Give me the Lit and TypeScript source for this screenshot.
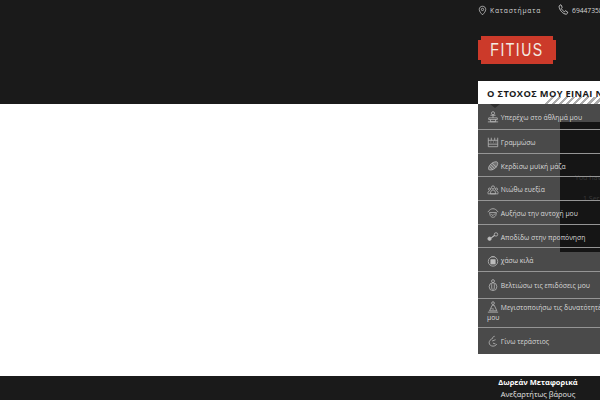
import { LitElement, html, css, svg } from "lit";
import { customElement } from "lit/decorators.js";

const ic = (body: unknown) => html`<svg class="icon" viewBox="0 0 14 14" fill="none" stroke="currentColor" stroke-width="0.9">${body}</svg>`;

const rows: { label: string; icon: unknown; kind?: string }[] = [
  { kind: "first", label: "Υπερέχω στο άθλημά μου", icon: svg`<circle cx="7" cy="2.600" r="1.800"/><path d="M4 5h6M7 5v3M2 8h10v2H2zM4 10v2.500h6V10M1 12.700h12"/>` },
  { label: "Γραμμώσω", icon: svg`<path d="M1.500 2v10.500h11V2M1.500 5h11M1.500 9.500h11M5 2v3M9 2v3M4 7h1M7 7h1M10 7h1"/>` },
  { label: "Κερδίσω μυϊκή μάζα", icon: svg`<path d="M2 11C.8 8 5 2 11 2c2 .3 1.800 3 .6 5C10 10 5 13 2 11z" fill="currentColor" fill-opacity=".35"/><path d="M4 5l5 5M6 3.500l5 5M3 7.500l4 4"/>` },
  { label: "Νιώθω ευεξία", icon: svg`<circle cx="7" cy="4" r="1.800"/><circle cx="3" cy="6" r="1.300"/><circle cx="11" cy="6" r="1.300"/><path d="M1 11c0-2 1-3 2-3M13 11c0-2-1-3-2-3M4 11.500c0-3 1.200-4.500 3-4.500s3 1.500 3 4.500zM1 11.500h12"/>` },
  { label: "Αυξήσω την αντοχή μου", icon: svg`<path d="M1 6c2-3 4-4 6-4s4 1 6 4"/><path d="M3 6.500h8l-.8 3.500c-1 1.500-2 2-3.200 2s-2.200-.5-3.200-2z"/><path d="M5 8.500l2 1.500 2.500-2.500"/>` },
  { label: "Αποδίδω στην προπόνηση", icon: svg`<circle cx="3" cy="9" r="2" fill="currentColor"/><path d="M5 8l4-3" stroke-width="1.400"/><circle cx="10.500" cy="4" r="2"/>` },
  { label: "χάσω κιλά", icon: svg`<circle cx="7" cy="7.500" r="5.500"/><rect x="4.500" y="5.500" width="5" height="5" fill="currentColor"/><path d="M5 2h4"/>` },
  { kind: "tall", label: "Βελτιώσω τις επιδόσεις μου", icon: svg`<circle cx="7" cy="2.500" r="1.700"/><circle cx="7" cy="9" r="4.500"/><path d="M5.500 6v5c1 1.500 2 1.500 3 0V6"/>` },
  { kind: "wrap", label: "Μεγιστοποιήσω τις δυνατότητές μου", icon: svg`<circle cx="7" cy="2.500" r="1.600"/><path d="M6 5l-3 6.500h8.500L8.500 5zM1 13h12M5 9l3 .5"/>` },
  { kind: "last", label: "Γίνω τεράστιος", icon: svg`<path d="M9 1.500c-1.500 0-2.500 1-2.500 2.500M6.500 4C4 5 2.500 7 2.500 9c0 2.500 2.200 4 4.500 4 2 0 3.500-1 4.500-2.500M6 7l4-1.500M7 9.500l3 1"/>` },
];

@customElement("app-root")
export class AppRoot extends LitElement {
  static styles = css`
    :host {
      display: grid;
      grid-template-rows: 104px 272px 24px;
      position: relative;
      width: 600px;
      height: 400px;
      overflow: hidden;
      background: #fff;
      font-family: "Open Sans", "Noto Sans", sans-serif;
      color: #e6e6e6;
    }
    .header {
      background: #1a1a1a;
      padding: 4px 0 0 478px;
      display: flex;
      flex-direction: column;
      overflow: hidden;
    }
    .top {
      display: flex;
      align-items: center;
      gap: 17px;
      height: 12px;
      font-size: 6.700px;
      white-space: nowrap;
      color: #d4d4d4;
    }
    .top span { display: flex; align-items: center; gap: 3px; }
    .stores { letter-spacing: 0.800px; }
    .stores svg { width: 9px; height: 11px; flex: none; }
    .phone svg { width: 11px; height: 12px; flex: none; }
    .logo { margin-top: 20px; width: 78px; height: 28px; }
    .logo-shape {
      width: 78px;
      height: 28px;
      background: #cc3a2a;
      clip-path: polygon(3px 0, 75px 0, 75px 4px, 78px 4px, 78px 24px, 75px 24px, 75px 28px, 3px 28px, 3px 24px, 0 24px, 0 4px, 3px 4px);
      display: flex;
      align-items: center;
      justify-content: center;
      color: #f3ece4;
      font-family: "Liberation Sans", sans-serif;
      font-size: 14px;
      letter-spacing: 1.500px;
    }
    .logo-shape span { display: inline-block; transform: scaleY(1.300); margin-top: -1px; }
    .main { background: #fff; }
    .footer {
      background: #1a1a1a;
      padding-left: 478px;
      display: flex;
      flex-direction: column;
      align-items: center;
      font-size: 7.500px;
      line-height: 11.500px;
      white-space: nowrap;
    }
    .footer span { width: 120px; margin-right: 2px; text-align: center; display: block; }
    .footer .free { font-weight: 700; color: #fff; margin-top: 1px; }
    .card {
      position: absolute;
      left: 478px;
      top: 81px;
      width: 300px;
      height: 273px;
      display: flex;
      flex-direction: column;
      background: #4a4a4a;
    }
    .title {
      height: 23px;
      flex: none;
      background: #fff;
      color: #1a1a1a;
      font-weight: 700;
      font-size: 9.300px;
      letter-spacing: 0.350px;
      line-height: 25px;
      padding-left: 9px;
      white-space: nowrap;
      position: relative;
      overflow: hidden;
    }
    .stripes {
      position: absolute;
      left: 66px;
      right: 0;
      bottom: 0;
      height: 7px;
      background: repeating-linear-gradient(135deg, #adadad 0 2.500px, #fff 2.500px 5px);
      clip-path: polygon(7px 0, 100% 0, 100% 100%, 0 100%);
    }
    .title b { position: relative; font-weight: 700; }
    .list { flex: 1; position: relative; display: flex; flex-direction: column; }
    .chev { position: absolute; left: 12px; top: 0; width: 10px; height: 4px; }
    .shade {
      position: absolute;
      left: 82px;
      top: 18px;
      width: 218px;
      height: 130px;
      background: #151515;
      color: #3a3a3a;
      font-size: 7px;
      display: flex;
      flex-direction: column;
      padding: 51px 0 0 15px;
      gap: 12px;
      box-sizing: border-box;
      white-space: nowrap;
    }
    .shade span + span { margin-left: 8px; }
    .row {
      position: relative;
      box-sizing: border-box;
      height: 23.700px;
      padding-left: 9px;
      font-size: 6.800px;
      line-height: 25px;
      color: #d8d8d8;
      white-space: nowrap;
      border-bottom: 1px solid #959595;
    }
    .row.first { height: 26px; line-height: 28px; }
    .row.tall { height: 26.700px; line-height: 27px; }
    .row.wrap { height: 29px; line-height: 9.500px; padding-top: 4px; width: 135px; white-space: normal; }
    .row.wrap::after {
      content: "";
      position: absolute;
      left: 135px;
      bottom: -1px;
      width: 165px;
      border-bottom: 1px solid #959595;
    }
    .row.last { border-bottom: 0; height: 26px; line-height: 27px; }
    .row .icon { width: 12px; height: 12px; vertical-align: middle; margin-top: -2px; color: #bdbdbd; }
    .row.tall .icon { height: 14px; }
  `;

  render() {
    return html`
      <div class="header">
        <div class="top">
          <span class="stores">
            <svg viewBox="0 0 10 11" fill="none" stroke="currentColor" stroke-width=".8"><path d="M5 .8c2.200 0 3.600 1.500 3.600 3.500 0 2.300-2 4.300-3.600 6-1.600-1.700-3.600-3.700-3.600-6C1.400 2.300 2.800.8 5 .8z"/><circle cx="5" cy="4.300" r="1.300"/></svg>
            Καταστήματα
          </span>
          <span class="phone">
            <svg viewBox="0 0 10 11" fill="none" stroke="currentColor" stroke-width=".8"><path d="M1 2c.5-1 1-1.300 1.700-1.200l1.100 2.200-.8 1c.5 1.300 1.600 2.500 2.900 3l1-.8 2 1.300c0 .8-.5 1.500-1.300 1.800C4.500 9.500 .8 5 1 2z"/></svg>
            6944735840
          </span>
        </div>
        <div class="logo"><div class="logo-shape"><span>FITIUS</span></div></div>
      </div>
      <div class="main"></div>
      <div class="footer">
        <span class="free">Δωρεάν Μεταφορικά</span>
        <span>Ανεξαρτήτως βάρους</span>
      </div>
      <div class="card">
        <div class="title"><div class="stripes"></div><b>Ο ΣΤΟΧΟΣ ΜΟΥ ΕΙΝΑΙ ΝΑ</b></div>
        <div class="list">
          <div class="shade"><span>You hav</span><span>1 Ser</span></div>
          <svg class="chev" viewBox="0 0 10 4" fill="#2e2e2e"><path d="M0 0h10L5 4z"/></svg>
          ${rows.map((r) => html`
            <div class="row ${r.kind ?? ""}">
              ${ic(r.icon)} ${r.label}
            </div>`)}
        </div>
      </div>
    `;
  }
}
